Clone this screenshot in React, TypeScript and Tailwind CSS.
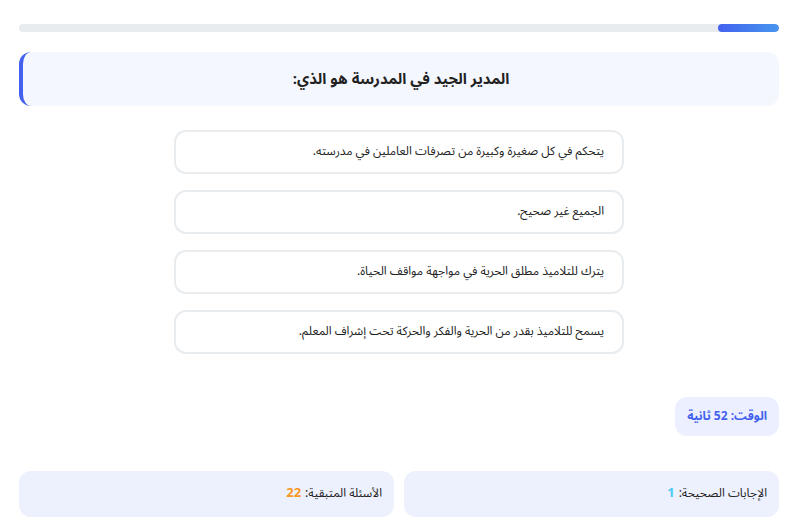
import React from "react";

const options = [
  "يتحكم في كل صغيرة وكبيرة من تصرفات العاملين في مدرسته.",
  "الجميع غير صحيح.",
  "يترك للتلاميذ مطلق الحرية في مواجهة مواقف الحياة.",
  "يسمح للتلاميذ بقدر من الحرية والفكر والحركة تحت إشراف المعلم.",
];

export default function App() {
  return (
    <div
      dir="rtl"
      className="bg-white min-h-screen pl-[19px] pr-[14px] pt-[24px] text-[#222] font-['Noto_Sans_Arabic','DejaVu_Sans',sans-serif]"
    >
      <div className="h-[8px] w-full rounded-full bg-[#e9ecef] overflow-hidden">
        <div className="h-full w-[8%] rounded-full bg-gradient-to-l from-[#4895ef] to-[#4361ee]" />
      </div>

      <div className="mt-[20px] h-[54px] rounded-xl border-l-4 border-[#4361ee] bg-[#f5f7ff] flex items-center justify-center">
        <h2 className="text-[15px] font-bold text-[#222]">المدير الجيد في المدرسة هو الذي:</h2>
      </div>

      <div className="mt-[24px] flex flex-col items-center gap-[16px]">
        {options.map((o) => (
          <div
            key={o}
            className="w-[450px] h-[44px] rounded-xl border-2 border-[#e9ecef] bg-white flex items-center pr-[18px] pl-4 text-[12px] text-[#222]"
          >
            {o}
          </div>
        ))}
      </div>

      <div className="mt-[43px] flex">
        <div className="h-[39px] px-3 rounded-xl bg-[#ebefff] flex items-center text-[12px] font-bold text-[#4361ee]">
          الوقت: 52 ثانية
        </div>
      </div>

      <div className="mt-[35px] grid grid-cols-2 gap-[10px]">
        <div className="h-[46px] rounded-xl bg-[#edf0fd] flex items-center px-3 text-[12px]">
          الإجابات الصحيحة: <span className="font-bold text-[13px] text-[#4cc9f0] mr-1">1</span>
        </div>
        <div className="h-[46px] rounded-xl bg-[#edf0fd] flex items-center px-3 text-[12px]">
          الأسئلة المتبقية: <span className="font-bold text-[13px] text-[#f8961e] mr-1">22</span>
        </div>
      </div>
    </div>
  );
}
